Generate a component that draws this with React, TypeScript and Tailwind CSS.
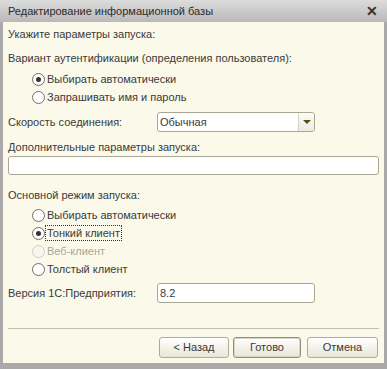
import React from 'react';

const font = { fontFamily: '"Liberation Sans", Arial, sans-serif' };

function Radio({ label, checked, disabled, focused }: { label: string; checked?: boolean; disabled?: boolean; focused?: boolean }) {
  return (
    <div className="flex items-center h-[18px] pl-[24px]">
      <span
        className={`w-[13px] h-[13px] rounded-full border flex items-center justify-center ${
          disabled ? 'border-[#d0cfc4] bg-[#f7f6ee]' : 'border-[#6f6f66] bg-white'
        }`}
      >
        {checked && <span className="w-[5px] h-[5px] rounded-full bg-[#333]" />}
      </span>
      <span
        className={`ml-[1px] px-[1px] leading-[14px] ${focused ? 'outline outline-1 outline-dotted outline-[#333]' : ''} ${
          disabled ? 'text-[#a9a89c]' : 'text-[#3a3a3a]'
        }`}
      >
        {label}
      </span>
    </div>
  );
}

function Btn({ label, active }: { label: string; active?: boolean }) {
  return (
    <button
      className={`h-[21px] rounded-[3px] border text-[11px] text-[#3a3a3a] bg-gradient-to-b from-[#ffffff] to-[#e8e6d6] ${
        active ? 'border-[#8f8e7c] shadow-[inset_0_0_0_1px_#d9d7c4]' : 'border-[#aeac98]'
      }`}
    >
      {label}
    </button>
  );
}

export default function App() {
  return (
    <div className="w-[387px] h-[369px] bg-[#a9a9a9] text-[11px] text-[#3a3a3a]" style={font}>
      <div className="h-[22px] bg-gradient-to-b from-[#dcdcdc] to-[#b9b9b9] flex items-center justify-between pl-[8px] pr-[9px]">
        <span className="text-[11px] text-[#2b2b2b]">Редактирование информационной базы</span>
        <span className="text-[14px] font-bold text-[#333] leading-none">✕</span>
      </div>
      <div className="mx-[3px] h-[341px] bg-[#fbf9ea] pl-[5px] pt-[3px]">
        <div className="h-[18px] flex items-center">Укажите параметры запуска:</div>
        <div className="h-[6px]" />
        <div className="h-[18px] flex items-center">Вариант аутентификации (определения пользователя):</div>
        <div className="h-[3px]" />
        <Radio label="Выбирать автоматически" checked />
        <Radio label="Запрашивать имя и пароль" />
        <div className="h-[6px]" />
        <div className="flex items-center h-[20px]">
          <span className="w-[149px]">Скорость соединения:</span>
          <div className="w-[158px] h-[20px] border border-[#a9a893] rounded-[3px] bg-white flex">
            <span className="flex-1 pl-[2px] flex items-center">Обычная</span>
            <span className="w-[16px] border-l border-[#d4d3c3] bg-gradient-to-b from-[#fdfdf8] to-[#ecebdd] rounded-r-[3px] flex items-center justify-center">
              <span className="w-0 h-0 border-l-[4px] border-r-[4px] border-t-[4px] border-l-transparent border-r-transparent border-t-[#5a4a1a]" />
            </span>
          </div>
        </div>
        <div className="h-[6px]" />
        <div className="h-[18px] flex items-center">Дополнительные параметры запуска:</div>
        <div className="h-[19px] w-[371px] border border-[#a9a893] rounded-[3px] bg-white" />
        <div className="h-[11px]" />
        <div className="h-[18px] flex items-center">Основной режим запуска:</div>
        <div className="h-[2px]" />
        <Radio label="Выбирать автоматически" />
        <Radio label="Тонкий клиент" checked focused />
        <Radio label="Веб-клиент" disabled />
        <Radio label="Толстый клиент" />
        <div className="h-[5px]" />
        <div className="flex items-center h-[20px]">
          <span className="w-[149px]">Версия 1С:Предприятия:</span>
          <div className="w-[158px] h-[20px] border border-[#a9a893] rounded-[3px] bg-white pl-[2px] flex items-center">8.2</div>
        </div>
        <div className="h-[25px]" />
        <div className="h-px w-[371px] bg-[#c2c1b0]" />
        <div className="flex justify-end mt-[8px] w-[370px]">
          <div className="w-[70px] grid"><Btn label="< Назад" /></div>
          <div className="w-[68px] grid ml-[4px]"><Btn label="Готово" active /></div>
          <div className="w-[71px] grid ml-[6px]"><Btn label="Отмена" /></div>
        </div>
      </div>
    </div>
  );
}
